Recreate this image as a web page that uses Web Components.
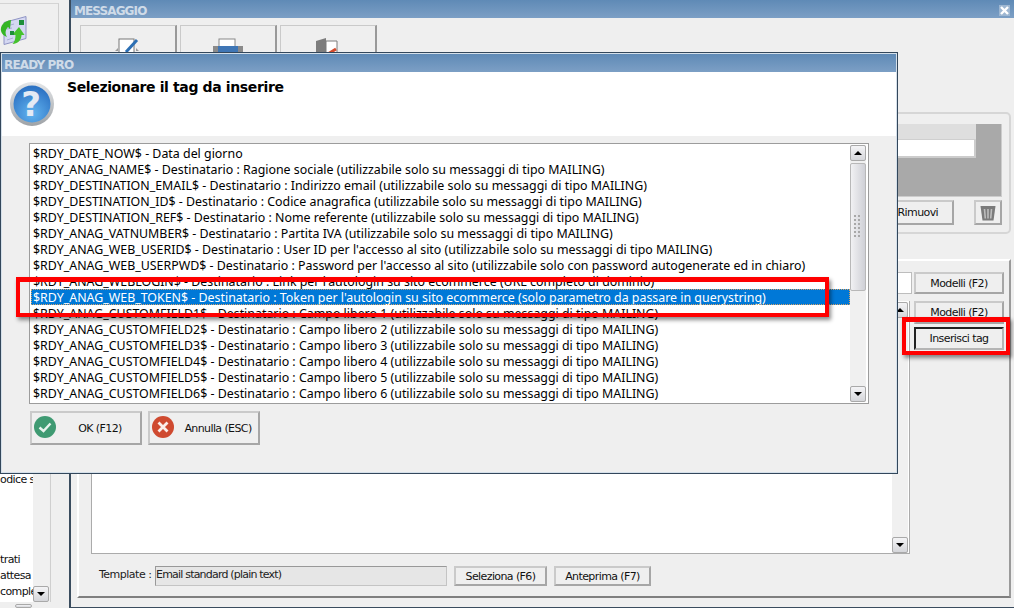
<!DOCTYPE html>
<html>
<head>
<meta charset="utf-8">
<title>Ready Pro</title>
<style>
  html, body { margin: 0; height: 100%; overflow: hidden; background: #efefef; }
  body { font: 11px "DejaVu Sans", sans-serif; color: #000; }
</style>
</head>
<body>
<rp-desktop></rp-desktop>
<script>
const ICONS = {
  ok: `<svg width="24" height="24" viewBox="0 0 24 24"><circle cx="12" cy="12" r="11" fill="#3f9a72"/><path d="M6.5 12.5l4 3.5 7-7.5" fill="none" stroke="#e8f3ee" stroke-width="2.4"/></svg>`,
  cancel: `<svg width="24" height="24" viewBox="0 0 24 24"><circle cx="12" cy="12" r="11" fill="#cf4a30"/><path d="M7.5 7.5l9 9M16.5 7.5l-9 9" fill="none" stroke="#fbeeea" stroke-width="2.8"/></svg>`,
  trash: `<svg width="18" height="16" viewBox="0 0 18 16"><path d="M1.5 1h15l-2 14.5h-11z" fill="#7b7b7b"/><path d="M5.5 4l.8 9.5M9 4v9.5M12.5 4l-.8 9.5" stroke="#bdbdbd" stroke-width="1.6"/></svg>`
};

class RpButton extends HTMLElement {
  constructor() {
    super();
    this.attachShadow({ mode: 'open' });
    this.shadowRoot.innerHTML = `
      <style>
        :host {
          display: flex;
          align-items: center;
          justify-content: center;
          box-sizing: border-box;
          background: #efefef;
          border: 2px solid #cacaca;
          border-right-color: #a6a6a6;
          border-bottom-color: #a6a6a6;
          font: 11px "DejaVu Sans", sans-serif;
          letter-spacing: -0.6px;
          color: #111;
          white-space: nowrap;
        }
        :host([focused]) {
          border-color: #b5b5b5;
          border-left: 2px solid #222;
          border-top: 2px solid #222;
        }
      </style>
      <slot></slot>
    `;
  }
}

class RpScrollbar extends HTMLElement {
  constructor() {
    super();
    this.attachShadow({ mode: 'open' });
    this.shadowRoot.innerHTML = `
      <style>
        :host {
          display: flex;
          flex-direction: column;
          justify-content: space-between;
          width: 16px;
          background: #f0f0f0;
          flex: none;
        }
        :host([down-only]) { justify-content: flex-end; }
        :host([down-only]) .up { display: none; }
        .btn {
          height: 16px;
          box-sizing: border-box;
          flex: none;
          display: flex;
          align-items: center;
          justify-content: center;
          background: linear-gradient(#f4f4f6, #d5d6da);
          border: 1px solid #a9a9a9;
          border-radius: 2px;
        }
        .btn i {
          width: 0;
          height: 0;
          border-left: 4px solid transparent;
          border-right: 4px solid transparent;
        }
        .up i { border-bottom: 4px solid #000; }
        .down i { border-top: 4px solid #000; }
        #thumb {
          flex: 1;
          display: none;
          align-items: center;
          justify-content: center;
          box-sizing: border-box;
          margin: 2px 0 95px;
          background: linear-gradient(90deg, #f1f1f3, #cfd0d6);
          border: 1px solid #b8b8b8;
          border-radius: 2px;
        }
        :host([thumb]) #thumb { display: flex; }
        #grip {
          width: 8px;
          height: 24px;
          background-image: radial-gradient(circle at 1px 1px, #a8a8a8 1px, transparent 1px);
          background-size: 4px 4px;
        }
      </style>
      <div class="btn up"><i></i></div>
      <div id="thumb"><div id="grip"></div></div>
      <div class="btn down"><i></i></div>
    `;
  }
}

class RpTagList extends HTMLElement {
  constructor() {
    super();
    this.attachShadow({ mode: 'open' });
    this.shadowRoot.innerHTML = `
      <style>
        :host {
          display: flex;
          box-sizing: border-box;
          height: 261px;
          margin: 7px 27px 0 27px;
          background: #fff;
          border: 1px solid #9c9c9c;
          padding: 1px 2px 1px 1px;
        }
        #rows { flex: 1; min-width: 0; overflow: hidden; }
        .row {
          height: 16px;
          padding-left: 2px;
          white-space: nowrap;
          font: 12.4px/17px "Noto Sans", sans-serif;
        }
        .row.sel {
          background: #0078d7;
          color: #fff;
          outline: 1px dotted #d8a468;
          outline-offset: -1px;
        }
      </style>
      <div id="rows"></div>
      <rp-scrollbar thumb></rp-scrollbar>
    `;
  }

  connectedCallback() {
    const mailing = '(utilizzabile solo su messaggi di tipo MAILING)';
    const tags = [
      `$RDY_DATE_NOW$ - Data del giorno`,
      `$RDY_ANAG_NAME$ - Destinatario : Ragione sociale ${mailing}`,
      `$RDY_DESTINATION_EMAIL$ - Destinatario : Indirizzo email ${mailing}`,
      `$RDY_DESTINATION_ID$ - Destinatario : Codice anagrafica ${mailing}`,
      `$RDY_DESTINATION_REF$ - Destinatario : Nome referente ${mailing}`,
      `$RDY_ANAG_VATNUMBER$ - Destinatario : Partita IVA ${mailing}`,
      `$RDY_ANAG_WEB_USERID$ - Destinatario : User ID per l'accesso al sito ${mailing}`,
      `$RDY_ANAG_WEB_USERPWD$ - Destinatario : Password per l'accesso al sito (utilizzabile solo con password autogenerate ed in chiaro)`,
      `$RDY_ANAG_WEBLOGIN$ - Destinatario : Link per l'autologin su sito ecommerce (URL completo di dominio)`,
      `$RDY_ANAG_WEB_TOKEN$ - Destinatario : Token per l'autologin su sito ecommerce (solo parametro da passare in querystring)`
    ];
    for (let i = 1; i <= 6; i++) {
      tags.push(`$RDY_ANAG_CUSTOMFIELD${i}$ - Destinatario : Campo libero ${i} ${mailing}`);
    }
    const rows = this.shadowRoot.getElementById('rows');
    tags.forEach((tag, i) => {
      const row = document.createElement('div');
      row.className = i === 9 ? 'row sel' : 'row';
      row.textContent = tag;
      rows.appendChild(row);
    });
  }
}

class RpTagDialog extends HTMLElement {
  constructor() {
    super();
    this.attachShadow({ mode: 'open' });
    this.shadowRoot.innerHTML = `
      <style>
        :host {
          position: absolute;
          left: 0;
          top: 52px;
          width: 898px;
          height: 422px;
          box-sizing: border-box;
          display: flex;
          flex-direction: column;
          background: #efefef;
          border: 1px solid #33475b;
          box-shadow: inset 0 0 0 1px #d5e0ea;
          padding: 1px;
        }
        #title {
          height: 18px;
          flex: none;
          box-sizing: border-box;
          padding: 2px 0 0 2px;
          background: linear-gradient(#5f8ab6, #7c9fc5);
          color: #cfdbe8;
          font: bold 12px/18px "DejaVu Sans", sans-serif;
          letter-spacing: -0.85px;
        }
        #head {
          height: 64px;
          flex: none;
          display: flex;
          background: #fff;
        }
        #head svg { margin: 9px 0 0 7px; flex: none; }
        #head h3 {
          margin: 6px 0 0 12px;
          font: bold 14px/18px "DejaVu Sans", sans-serif;
          letter-spacing: -0.37px;
        }
        #actions { display: flex; gap: 6px; margin: 7px 0 0 28px; }
        rp-button {
          width: 112px;
          height: 34px;
          position: relative;
          padding-left: 28px;
        }
        rp-button svg { position: absolute; left: 1px; top: 2px; }
      </style>
      <div id="title">READY PRO</div>
      <div id="head">
        <svg width="46" height="46" viewBox="0 0 46 46">
          <defs>
            <radialGradient id="q" cx="50%" cy="75%" r="70%"><stop offset="0" stop-color="#62b4f0"/><stop offset="1" stop-color="#2d73c4"/></radialGradient>
            <linearGradient id="ring" x1="0" y1="0" x2="0" y2="1"><stop offset="0" stop-color="#e4e6e8"/><stop offset="1" stop-color="#9ea2a6"/></linearGradient>
          </defs>
          <circle cx="23" cy="23" r="22" fill="url(#ring)"/>
          <circle cx="23" cy="23" r="18.5" fill="url(#q)"/>
          <text x="22" y="35" text-anchor="middle" font-family="DejaVu Sans" font-weight="bold" font-size="34" fill="#e4eaf4">?</text>
        </svg>
        <h3>Selezionare il tag da inserire</h3>
      </div>
      <rp-tag-list></rp-tag-list>
      <div id="actions">
        <rp-button>${ICONS.ok}OK (F12)</rp-button>
        <rp-button>${ICONS.cancel}Annulla (ESC)</rp-button>
      </div>
    `;
  }
}

class RpMessageWindow extends HTMLElement {
  constructor() {
    super();
    this.attachShadow({ mode: 'open' });
    this.shadowRoot.innerHTML = `
      <style>
        :host {
          position: absolute;
          left: 69px;
          top: 0;
          right: 0;
          bottom: 0;
          box-sizing: border-box;
          display: flex;
          flex-direction: column;
          background: #efefef;
          border-left: 2px solid #3a4c5e;
          border-bottom: 1px solid #3a4c5e;
        }
        #title {
          height: 18px;
          flex: none;
          box-sizing: border-box;
          display: flex;
          justify-content: space-between;
          align-items: center;
          padding: 3px 4px 0 3px;
          background: linear-gradient(#5f8ab6, #7c9fc5);
          color: #cfdbe8;
          font: bold 12px "DejaVu Sans", sans-serif;
          letter-spacing: -0.9px;
        }
        #close {
          width: 11px;
          height: 11px;
          background: #9db6d1;
          border: 0;
          display: flex;
        }
        #tools { display: flex; gap: 3px; margin: 7px 0 0 9px; flex: none; }
        .tool {
          width: 97px;
          height: 70px;
          box-sizing: border-box;
          border: 1px solid #cacaca;
          border-right: 2px solid #999;
          border-bottom: 2px solid #999;
          display: flex;
          justify-content: center;
          padding-top: 12px;
        }
        #group {
          flex: none;
          box-sizing: border-box;
          height: 122px;
          margin: 17px 3px 0 120px;
          border: 2px solid #d6d6d6;
          border-radius: 5px;
          padding: 10px 7px 0 0;
          display: flex;
          flex-direction: column;
        }
        #grid {
          height: 73px;
          flex: none;
          box-sizing: border-box;
          background: #a9a9a9;
          border-right: 1px solid #ccc;
          border-bottom: 1px solid #ccc;
          padding-right: 25px;
        }
        #grid div:first-child { height: 15px; background: #dedede; border-bottom: 1px solid #cfcfcf; }
        #grid div:last-child { height: 16px; background: #fff; border-bottom: 2px solid #ccc; border-right: 2px solid #ccc; }
        #group-actions { display: flex; justify-content: flex-end; margin-top: 3px; gap: 20px; }
        #group-actions rp-button { height: 25px; }
        #remove { width: 120px; justify-content: flex-end; padding-right: 14px; }
        #bin { width: 28px; }
        #panel {
          flex: 1;
          box-sizing: border-box;
          margin: 25px 3px 9px 6px;
          border-top: 2px solid #fff;
          border-left: 2px solid #fff;
          border-right: 2px solid #9a9a9a;
          border-bottom: 2px solid #7f7f7f;
          display: grid;
          grid-template-columns: 1fr 90px;
          grid-template-rows: 22px 253px 20px;
          column-gap: 4px;
          row-gap: 7px;
          padding: 11px 5px 0 12px;
          align-content: start;
        }
        .field { background: #fff; border: 1px solid #bdbdbd; box-sizing: border-box; margin-right: -2px; }
        #side { display: flex; flex-direction: column; gap: 3px; }
        #side rp-button { height: 23px; }
        #editor {
          display: flex;
          justify-content: flex-end;
          background: #fff;
          border: 1px solid #ababab;
          border-top: 0;
          box-sizing: border-box;
          padding: 1px 1px 0 0;
        }
        #foot {
          grid-column: 1 / 3;
          display: flex;
          align-items: stretch;
          margin-top: 5px;
          height: 20px;
        }
        #foot label { width: 56px; padding-left: 8px; line-height: 17px; white-space: nowrap; letter-spacing: -0.5px; color: #222; }
        #foot output {
          width: 292px;
          box-sizing: border-box;
          background: #e6e6e6;
          border: 1px solid #c4c4c4;
          border-top-color: #999;
          border-left-color: #999;
          line-height: 15px;
          letter-spacing: -0.8px;
          color: #222;
          white-space: nowrap;
        }
        #seleziona { width: 93px; margin-left: 7px; }
        #anteprima { width: 97px; margin-left: 7px; }
      </style>
      <div id="title">
        <span>MESSAGGIO</span>
        <span id="close"><svg width="11" height="11" viewBox="0 0 11 11"><path d="M2 2l7 7M9 2l-7 7" stroke="#fff" stroke-width="2.4"/></svg></span>
      </div>
      <div id="tools">
        <div class="tool"><svg width="30" height="16" viewBox="0 0 30 16"><path d="M2 13l3-3v3zM26 13l-3-3v3z" fill="#9a9a9a"/><rect x="6" y="1" width="15" height="15" fill="#fff" stroke="#777"/><path d="M13 14L24 2" stroke="#2c6fb4" stroke-width="3"/></svg></div>
        <div class="tool"><svg width="32" height="16" viewBox="0 0 32 16"><rect x="1" y="8" width="30" height="8" fill="#8a8a8a"/><rect x="7" y="1" width="16" height="9" fill="#fff" stroke="#888"/><rect x="6" y="8" width="20" height="8" fill="#3f76b5"/></svg></div>
        <div class="tool"><svg width="26" height="16" viewBox="0 0 26 16"><path d="M1 3l10-3v16H1z" fill="#7d7d7d"/><path d="M11 3h11v13H11z" fill="#fff" stroke="#7d7d7d"/><path d="M13 16l8-5" stroke="#d24a2c" stroke-width="3"/></svg></div>
      </div>
      <div id="group">
        <div id="grid"><div></div><div></div></div>
        <div id="group-actions">
          <rp-button id="remove">Rimuovi</rp-button>
          <rp-button id="bin">${ICONS.trash}</rp-button>
        </div>
      </div>
      <div id="panel">
        <div class="field"></div>
        <rp-button>Modelli (F2)</rp-button>
        <div id="editor"><rp-scrollbar></rp-scrollbar></div>
        <div id="side">
          <rp-button>Modelli (F2)</rp-button>
          <rp-button focused>Inserisci tag</rp-button>
        </div>
        <div id="foot">
          <label>Template :</label>
          <output>Email standard (plain text)</output>
          <rp-button id="seleziona">Seleziona (F6)</rp-button>
          <rp-button id="anteprima">Anteprima (F7)</rp-button>
        </div>
      </div>
    `;
  }
}

class RpSidePanel extends HTMLElement {
  constructor() {
    super();
    this.attachShadow({ mode: 'open' });
    this.shadowRoot.innerHTML = `
      <style>
        :host {
          position: absolute;
          left: 0;
          top: 0;
          bottom: 0;
          width: 69px;
          display: flex;
          flex-direction: column;
          background: #efefef;
        }
        #top {
          height: 49px;
          flex: none;
          width: 59px;
          box-sizing: border-box;
          margin-top: 3px;
          border-top: 1px solid #d4d4d4;
          border-right: 1px solid #cfcfcf;
        }
        #top svg { display: block; margin-top: 12px; }
        #list {
          height: 550px;
          flex: none;
          width: 51px;
          box-sizing: border-box;
          display: flex;
          border-right: 1px solid #cfcfcf;
        }
        #rows {
          width: 33px;
          background: #fff;
          overflow: hidden;
          padding-top: 420px;
          box-sizing: border-box;
          letter-spacing: -0.6px;
          white-space: nowrap;
          color: #111;
        }
        #rows div { height: 16px; line-height: 16px; }
        #spacer { height: 64px !important; }
        #stub {
          width: 17px;
          height: 10px;
          margin: 2px 0 0 15px;
          background: linear-gradient(#f4f4f6, #d5d6da);
          border: 1px solid #a9a9a9;
          border-radius: 2px;
          box-sizing: border-box;
        }
      </style>
      <div id="top">
        <svg width="28" height="30" viewBox="0 0 28 30">
          <path d="M4 6.5L26 .5v22L4 28.5z" fill="#d5d8f2" stroke="#8f94c4"/>
          <path d="M7 10l7-2M7 13l5-1M7 24l6-2" stroke="#a8acd6"/>
          <rect x="19" y="4" width="5" height="5" fill="#1d8f3a"/>
          <path d="M11 4C4 5 0 10 1 15c.6 3 3 5 6 6-2-3-2-7 1-10l2 2 1-9z" fill="#35b524"/>
          <path d="M19 11l-7 8h3.500c0 4-1 7-3 9 5 0 9-4 9-9h3z" fill="#45c22d"/>
          <rect x="10" y="15" width="4" height="4" fill="#1d8f3a"/>
        </svg>
      </div>
      <div id="list">
        <div id="rows">
          <div>odice s</div>
          <div id="spacer"></div>
          <div>trati</div>
          <div>attesa</div>
          <div>comple</div>
        </div>
        <rp-scrollbar down-only></rp-scrollbar>
      </div>
      <div id="stub"></div>
    `;
  }
}

class RpHighlight extends HTMLElement {
  constructor() {
    super();
    this.attachShadow({ mode: 'open' });
    this.shadowRoot.innerHTML = `
      <style>
        :host {
          position: absolute;
          box-sizing: border-box;
          border: 4px solid #f00;
          border-top-width: 5px;
          box-shadow: 2px 3px 4px rgba(0, 0, 0, 0.45);
          pointer-events: none;
        }
      </style>
    `;
  }
}

class RpDesktop extends HTMLElement {
  constructor() {
    super();
    this.attachShadow({ mode: 'open' });
    this.shadowRoot.innerHTML = `
      <style>
        :host {
          display: block;
          position: relative;
          width: 1014px;
          height: 608px;
          overflow: hidden;
        }
        #tag-box { left: 16px; top: 277px; width: 813px; height: 40px; }
        #btn-box { left: 902px; top: 317px; width: 108px; height: 38px; }
      </style>
      <rp-side-panel></rp-side-panel>
      <rp-message-window></rp-message-window>
      <rp-tag-dialog></rp-tag-dialog>
      <rp-highlight id="tag-box"></rp-highlight>
      <rp-highlight id="btn-box"></rp-highlight>
    `;
  }
}

customElements.define('rp-button', RpButton);
customElements.define('rp-scrollbar', RpScrollbar);
customElements.define('rp-tag-list', RpTagList);
customElements.define('rp-tag-dialog', RpTagDialog);
customElements.define('rp-message-window', RpMessageWindow);
customElements.define('rp-side-panel', RpSidePanel);
customElements.define('rp-highlight', RpHighlight);
customElements.define('rp-desktop', RpDesktop);
</script>
</body>
</html>
